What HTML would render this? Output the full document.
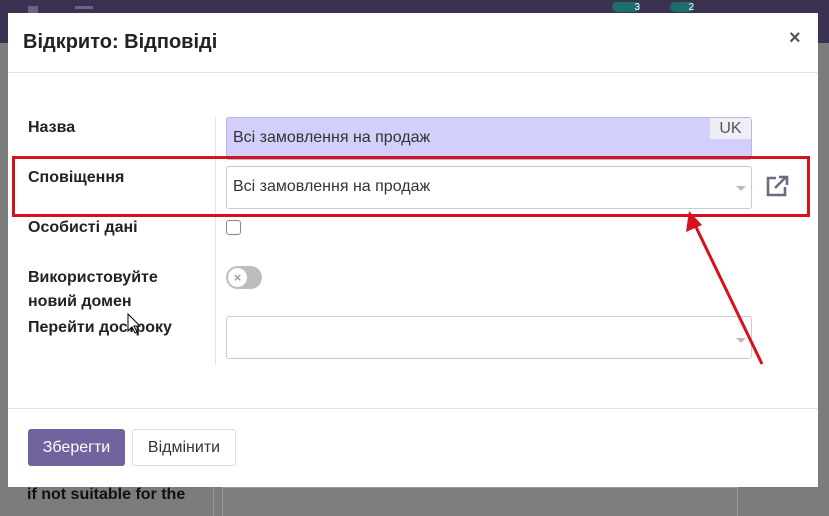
<!DOCTYPE html>
<html><head><meta charset="utf-8"><style>
html,body{margin:0;width:829px;height:516px;overflow:hidden}
body{background:#7c7c7c;font-family:"Liberation Sans","Noto Sans CJK SC",sans-serif;position:relative}
.a{position:absolute}
.nav{left:0;top:0;width:829px;height:43px;background:#3a3250}
.modal{left:8px;top:13px;width:810px;height:474px;background:#fff}
.lbl{font-weight:bold;font-size:16px;color:#222;left:28px}
.inp{left:226px;width:526px;border:1px solid #ccc;border-radius:3px;height:43px;box-sizing:border-box;font-size:16px;color:#333;padding:11px 6px;}
.car{width:0;height:0;border-left:5px solid transparent;border-right:5px solid transparent;border-top:5px solid #bbb}
</style></head><body>
<div class="a nav"></div>
<div class="a" style="left:28px;top:6px;width:10px;height:8px;background:#6a6480"></div>
<div class="a" style="left:75px;top:6px;width:18px;height:3px;background:#6a6480"></div>
<div class="a" style="left:612px;top:2px;width:28px;height:10px;background:#1c6e6a;border-radius:5px;color:#fff;font-size:10px;text-align:right">3</div>
<div class="a" style="left:670px;top:2px;width:24px;height:10px;background:#1c6e6a;border-radius:5px;color:#fff;font-size:10px;text-align:right">2</div>
<div class="a" style="left:222px;top:487px;width:514px;height:40px;border:1px solid #999;background:#7e7e7e"></div>
<div class="a" style="left:213px;top:487px;width:1px;height:40px;background:#999"></div>
<div class="a" style="left:27px;top:486px;font-weight:bold;font-size:16px;color:#111">if not suitable for the</div>
<div class="a modal"></div>
<div class="a" style="left:23px;top:31px;font-size:20px;font-weight:bold;color:#222">Відкрито: Відповіді</div>
<div class="a" style="left:789px;top:27px;font-size:20px;font-weight:bold;color:#555">×</div>
<div class="a" style="left:8px;top:72px;width:810px;height:1px;background:#dee2e6"></div>
<div class="a" style="left:215px;top:117px;width:1px;height:248px;background:#e3e3e3"></div>
<div class="a lbl" style="top:119px">Назва</div>
<div class="a lbl" style="top:169px">Сповіщення</div>
<div class="a lbl" style="top:219px">Особисті дані</div>
<div class="a lbl" style="top:266px;line-height:24px">Використовуйте<br>новий домен</div>
<div class="a lbl" style="top:319px">Перейти достроку</div>
<div class="a inp" style="top:117px;background:#d2cffb;border-color:#b8b4e0">Всі замовлення на продаж</div>
<div class="a" style="left:710px;top:118px;width:41px;height:21px;background:#eeeef4;color:#555;font-size:16px;text-align:center;line-height:21px">UK</div>
<div class="a inp" style="top:166px">Всі замовлення на продаж</div>
<div class="a car" style="left:736px;top:186px"></div>
<svg class="a" style="left:764px;top:174px" width="27" height="24" viewBox="0 0 27 24"><path d="M12 4H4v17h17v-8" fill="none" stroke="#6b6b7e" stroke-width="2.6"/><path d="M11 14L22 3M15 3h8v8" fill="none" stroke="#6b6b7e" stroke-width="2.6"/></svg>
<div class="a" style="left:226px;top:220px;width:13px;height:13px;border:1px solid #888;border-radius:3px"></div>
<div class="a" style="left:226px;top:266px;width:36px;height:23px;border-radius:12px;background:#bdbdbd"></div>
<div class="a" style="left:228px;top:268px;width:19px;height:19px;border-radius:50%;background:#fff;color:#999;font-size:13px;font-weight:bold;text-align:center;line-height:19px">×</div>
<div class="a inp" style="top:316px"></div>
<div class="a car" style="left:736px;top:338px"></div>
<div class="a" style="left:8px;top:408px;width:810px;height:1px;background:#dee2e6"></div>
<div class="a" style="left:28px;top:429px;width:97px;height:37px;background:#71639e;border-radius:3px;color:#fff;font-size:16px;text-align:center;line-height:37px">Зберегти</div>
<div class="a" style="left:132px;top:429px;width:102px;height:35px;border:1px solid #ddd;border-radius:3px;color:#333;font-size:16px;text-align:center;line-height:35px">Відмінити</div>
<div class="a" style="left:12px;top:156px;width:792px;height:55px;border:3px solid #d8101c"></div>
<svg class="a" style="left:0;top:0" width="829" height="516"><line x1="762" y1="364" x2="695" y2="225" stroke="#d8101c" stroke-width="3"/><polygon points="689,211 686,232 702,225" fill="#d8101c"/></svg>
<svg class="a" style="left:127px;top:313px" width="16" height="22"><path d="M1 1v17l4-4 3 6 2-1-3-6h6z" fill="#fff" stroke="#000"/></svg>
</body></html>
